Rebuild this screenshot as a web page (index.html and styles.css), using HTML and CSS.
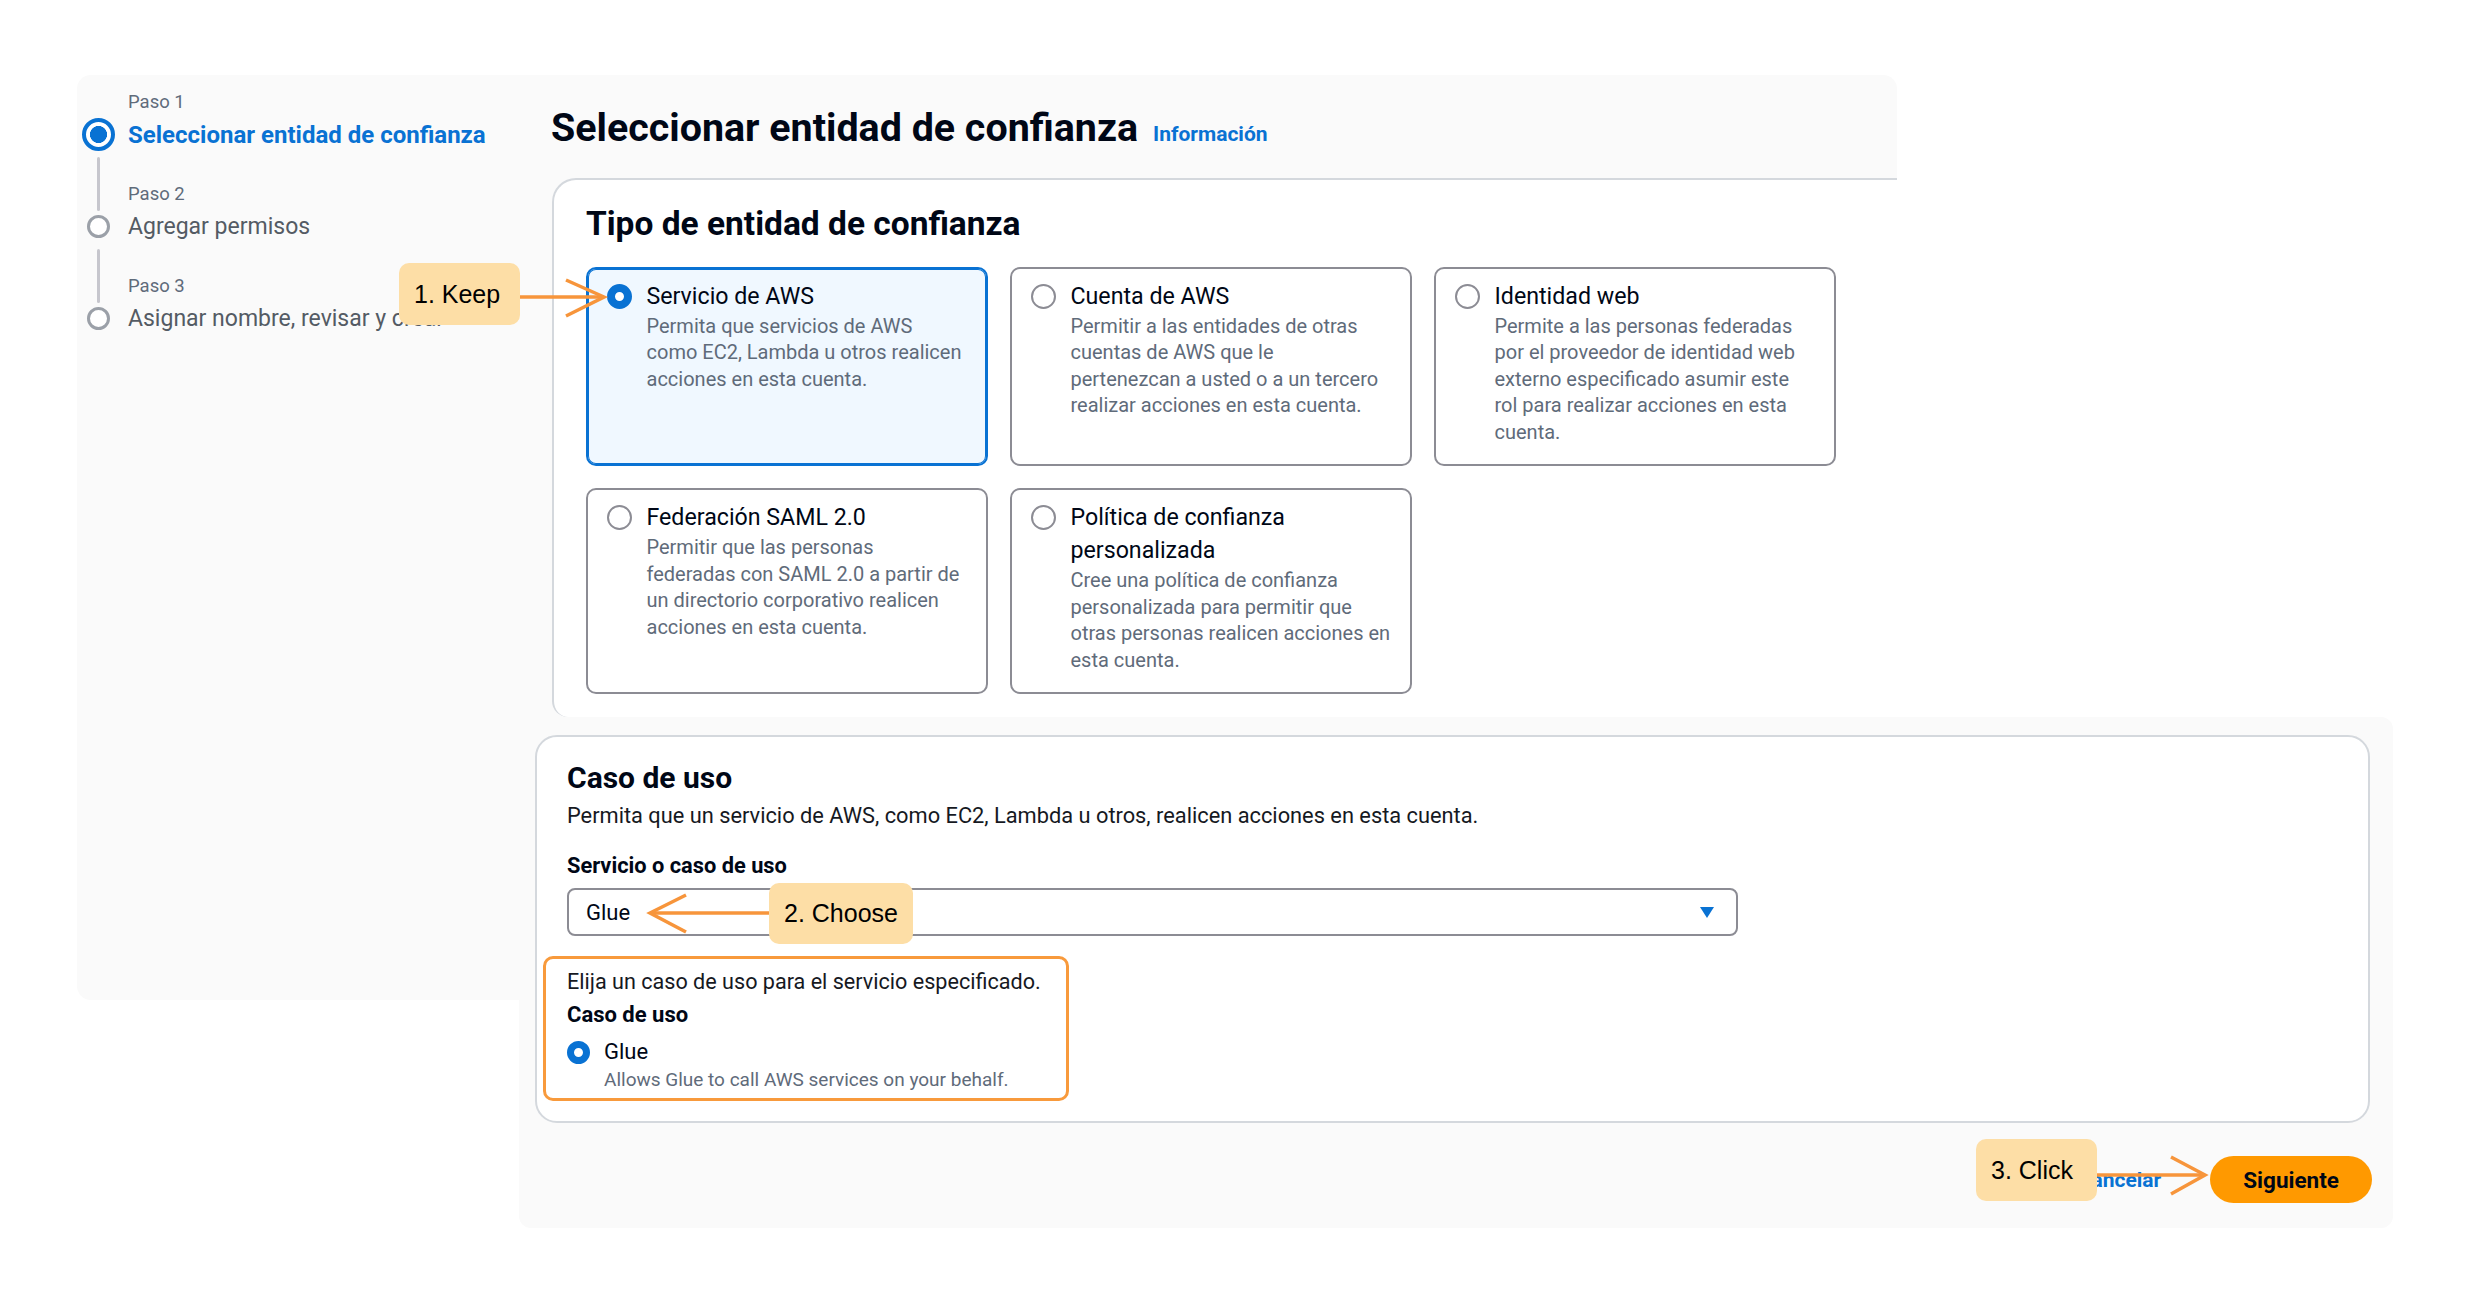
FILE: index.html
```html
<!DOCTYPE html>
<html lang="es">
<head>
<meta charset="utf-8">
<title>Seleccionar entidad de confianza</title>
<link rel="stylesheet" href="styles.css">
</head>
<body>
<div class="page">
  <div class="wizard-top">
    <nav class="steps">
      <div class="step step-first">
        <div class="rail"><span class="rail-gap"></span><span class="dot dot-active"></span></div>
        <div class="step-label">Paso 1</div>
        <div class="step-title step-title-active">Seleccionar entidad de confianza</div>
      </div>
      <div class="step">
        <div class="rail"><span class="rail-line"></span><span class="dot"></span></div>
        <div class="step-label">Paso 2</div>
        <div class="step-title">Agregar permisos</div>
      </div>
      <div class="step">
        <div class="rail"><span class="rail-line"></span><span class="dot"></span></div>
        <div class="step-label">Paso 3</div>
        <div class="step-title">Asignar nombre, revisar y crear</div>
      </div>
    </nav>
    <main class="main">
      <header class="page-header">
        <h1 class="page-title">Seleccionar entidad de confianza</h1>
        <a class="info-link">Información</a>
      </header>
      <section class="tile-group">
        <h2 class="group-title">Tipo de entidad de confianza</h2>
        <div class="tiles">
          <div class="tile tile-selected">
            <span class="radio radio-on"></span>
            <div class="tile-body">
              <div class="tile-title">Servicio de AWS</div>
              <div class="tile-desc">Permita que servicios de AWS<br>como EC2, Lambda u otros realicen<br>acciones en esta cuenta.</div>
            </div>
          </div>
          <div class="tile">
            <span class="radio"></span>
            <div class="tile-body">
              <div class="tile-title">Cuenta de AWS</div>
              <div class="tile-desc">Permitir a las entidades de otras<br>cuentas de AWS que le<br>pertenezcan a usted o a un tercero<br>realizar acciones en esta cuenta.</div>
            </div>
          </div>
          <div class="tile">
            <span class="radio"></span>
            <div class="tile-body">
              <div class="tile-title">Identidad web</div>
              <div class="tile-desc">Permite a las personas federadas<br>por el proveedor de identidad web<br>externo especificado asumir este<br>rol para realizar acciones en esta<br>cuenta.</div>
            </div>
          </div>
          <div class="tile">
            <span class="radio"></span>
            <div class="tile-body">
              <div class="tile-title">Federación SAML 2.0</div>
              <div class="tile-desc">Permitir que las personas<br>federadas con SAML 2.0 a partir de<br>un directorio corporativo realicen<br>acciones en esta cuenta.</div>
            </div>
          </div>
          <div class="tile">
            <span class="radio"></span>
            <div class="tile-body">
              <div class="tile-title">Política de confianza<br>personalizada</div>
              <div class="tile-desc">Cree una política de confianza<br>personalizada para permitir que<br>otras personas realicen acciones en<br>esta cuenta.</div>
            </div>
          </div>
        </div>
      </section>
    </main>
  </div>

  <div class="wizard-bottom">
    <div class="sidebar-tail"></div>
    <div class="panel2">
      <section class="use-case">
        <h2 class="uc-title">Caso de uso</h2>
        <p class="uc-desc">Permita que un servicio de AWS, como EC2, Lambda u otros, realicen acciones en esta cuenta.</p>
        <div class="field-label">Servicio o caso de uso</div>
        <div class="select"><span class="select-value">Glue</span><span class="caret"></span></div>
        <div class="highlight">
          <div class="hl-text">Elija un caso de uso para el servicio especificado.</div>
          <div class="hl-label">Caso de uso</div>
          <div class="option">
            <span class="radio radio-on radio-sm"></span>
            <div class="opt-title">Glue</div>
            <div class="opt-desc">Allows Glue to call AWS services on your behalf.</div>
          </div>
        </div>
      </section>
      <div class="actions">
        <a class="cancel-link">Cancelar</a>
        <button class="btn-primary">Siguiente</button>
      </div>
    </div>
  </div>

  <svg class="arrows" width="2469" height="1307" viewBox="0 0 2469 1307">
    <g fill="none" stroke="#f7953b" stroke-width="3.5" stroke-linejoin="miter">
      <path d="M520 297 H603"/>
      <path d="M566 280 L604 297 L566 316"/>
      <path d="M650 913 H769"/>
      <path d="M686 895 L650 913 L686 932"/>
      <path d="M2097 1175 H2204"/>
      <path d="M2171 1157 L2205 1175 L2171 1194"/>
    </g>
  </svg>
  <div class="callout callout-keep">1. Keep</div>
  <div class="callout callout-choose">2. Choose</div>
  <div class="callout callout-click">3. Click</div>
</div>
</body>
</html>
```

FILE: styles.css
```css
html, body {
  margin: 0;
  padding: 0;
  background: #ffffff;
}

body {
  font-family: Roboto, "Noto Sans", "Liberation Sans", sans-serif;
  color: #000716;
}

.page {
  position: relative;
  width: 2469px;
  height: 1307px;
  box-sizing: border-box;
  padding: 75px 0 0 77px;
  overflow: hidden;
}

/* ---------- top panel ---------- */
.wizard-top {
  width: 1820px;
  height: 642px;
  display: grid;
  grid-template-columns: 475px 1345px;
  background: #fafafa;
  border-radius: 14px 14px 0 0;
}

.steps {
  padding-top: 13.5px;
}

.step {
  display: grid;
  grid-template-columns: 42px 1fr;
  column-gap: 9px;
}

.rail {
  grid-column: 1;
  grid-row: 1 / 3;
  display: flex;
  flex-direction: column;
  align-items: center;
}

.rail-gap {
  flex: 1;
}

.rail-line {
  flex: 1;
  width: 3px;
  margin: 6px 0 4px;
  background: #c6c6cd;
  border-radius: 2px;
}

.dot {
  width: 23px;
  height: 23px;
  box-sizing: border-box;
  border: 3px solid #9ba0a8;
  border-radius: 50%;
  background: #ffffff;
  margin-bottom: 4.5px;
  flex: none;
}

.dot-active {
  width: 33px;
  height: 33px;
  border: 4.5px solid #0972d3;
  background: radial-gradient(circle closest-side, #0972d3 66%, #ffffff 70%);
  margin-bottom: 0;
}

.step-label {
  grid-column: 2;
  margin-top: 30px;
  font-size: 18.5px;
  line-height: 26px;
  color: #5f6b7a;
}

.step-first .step-label {
  margin-top: 0;
}

.step-title {
  grid-column: 2;
  margin-top: 4px;
  font-size: 23px;
  line-height: 32px;
  color: #545b64;
  white-space: nowrap;
}

.step-title-active {
  font-size: 24px;
  font-weight: 700;
  color: #0972d3;
}

/* ---------- main ---------- */
.main {
  display: flex;
  flex-direction: column;
}

.page-header {
  height: 103px;
  box-sizing: border-box;
  padding-top: 28.5px;
  display: flex;
  align-items: baseline;
}

.page-title {
  margin: 0 0 0 -1px;
  font-size: 39.4px;
  line-height: 48px;
  font-weight: 700;
  color: #000716;
}

.info-link {
  margin-left: 15px;
  font-size: 21px;
  font-weight: 700;
  color: #0972d3;
}

.tile-group {
  height: 539px;
  box-sizing: border-box;
  background: #ffffff;
  border-top: 2px solid #d4d8dd;
  border-left: 2px solid #d4d8dd;
  border-radius: 24px 0 0 16px;
  padding: 24px 0 0 32px;
}

.group-title {
  margin: 0;
  font-size: 33.5px;
  line-height: 40px;
  font-weight: 700;
  color: #000716;
}

.tiles {
  margin-top: 23px;
  display: grid;
  grid-template-columns: repeat(3, 402px);
  gap: 22px;
}

.tile {
  box-sizing: border-box;
  border: 2px solid #8c8c94;
  border-radius: 10px;
  padding: 10.5px 8px 19px 18.5px;
  display: grid;
  grid-template-columns: 25px 1fr;
  column-gap: 15px;
  align-items: start;
  background: #ffffff;
}

.tile-selected {
  border-color: #0972d3;
  box-shadow: inset 0 0 0 1px #0972d3;
  background: #f0f8ff;
}

.radio {
  display: block;
  width: 25px;
  height: 25px;
  box-sizing: border-box;
  border: 2px solid #8c8c94;
  border-radius: 50%;
  background: #ffffff;
  margin-top: 4px;
}

.radio-on {
  border: 8px solid #0972d3;
}

.tile-title {
  font-size: 23.2px;
  line-height: 33px;
  color: #000716;
}

.tile-desc {
  font-size: 20px;
  line-height: 26.6px;
  color: #5f6b7a;
  white-space: nowrap;
}

/* ---------- bottom ---------- */
.wizard-bottom {
  display: flex;
  align-items: flex-start;
}

.sidebar-tail {
  width: 442px;
  height: 283px;
  background: #fafafa;
  border-bottom-left-radius: 14px;
}

.panel2 {
  width: 1874px;
  height: 511px;
  box-sizing: border-box;
  background: #fafafa;
  border-radius: 0 12px 12px 12px;
  padding: 18px 23px 0 16px;
}

.use-case {
  height: 388px;
  box-sizing: border-box;
  background: #ffffff;
  border: 2px solid #d4d8dd;
  border-radius: 22px;
  padding: 23px 30px 0;
}

.uc-title {
  margin: 0;
  font-size: 30px;
  line-height: 36px;
  font-weight: 700;
}

.uc-desc {
  margin: 6px 0 0;
  font-size: 21.8px;
  line-height: 28px;
  color: #16191f;
}

.field-label {
  margin-top: 21.5px;
  font-size: 21.8px;
  line-height: 28px;
  font-weight: 700;
}

.select {
  margin-top: 8.5px;
  width: 1171px;
  height: 48px;
  box-sizing: border-box;
  border: 2px solid #8c8c94;
  border-radius: 8px;
  display: flex;
  align-items: center;
  justify-content: space-between;
  padding: 0 22px 0 17px;
  font-size: 22px;
  background: #ffffff;
}

.caret {
  width: 0;
  height: 0;
  border-left: 7.5px solid transparent;
  border-right: 7.5px solid transparent;
  border-top: 11px solid #0972d3;
}

.highlight {
  margin: 20px 0 0 -24px;
  width: 526px;
  box-sizing: border-box;
  border: 3px solid #f89a3c;
  border-radius: 10px;
  padding: 10px 6px 6px 21px;
}

.hl-text {
  font-size: 21.6px;
  line-height: 26px;
  color: #16191f;
  white-space: nowrap;
}

.hl-label {
  margin-top: 6.5px;
  font-size: 22px;
  line-height: 26px;
  font-weight: 700;
}

.option {
  margin-top: 10.5px;
  display: grid;
  grid-template-columns: 23px 1fr;
  column-gap: 14px;
}

.radio-sm {
  width: 23px;
  height: 23px;
  border-width: 7px;
  margin-top: 2.5px;
}

.opt-title {
  font-size: 22px;
  line-height: 28px;
}

.opt-desc {
  grid-column: 2;
  margin-top: 2px;
  font-size: 19px;
  line-height: 24px;
  color: #5f6b7a;
  white-space: nowrap;
}

.actions {
  margin-top: 33px;
  margin-right: -2px;
  display: flex;
  justify-content: flex-end;
  align-items: center;
  gap: 49px;
}

.cancel-link {
  font-size: 21px;
  font-weight: 700;
  color: #0972d3;
}

.btn-primary {
  height: 47px;
  padding: 0 33px;
  border: none;
  border-radius: 24px;
  background: #ff9900;
  font-family: Roboto, "Noto Sans", sans-serif;
  font-size: 22.5px;
  font-weight: 700;
  color: #000716;
}

/* ---------- annotations ---------- */
.arrows {
  position: absolute;
  left: 0;
  top: 0;
  pointer-events: none;
}

.callout {
  position: absolute;
  box-sizing: border-box;
  display: flex;
  align-items: center;
  padding-left: 15px;
  background: #fddea6;
  border-radius: 10px;
  font-family: "Liberation Sans", Arial, sans-serif;
  font-size: 25px;
  color: #000000;
  white-space: nowrap;
}

.callout-keep {
  left: 399px;
  top: 263px;
  width: 121px;
  height: 62px;
}

.callout-choose {
  left: 769px;
  top: 883px;
  width: 144px;
  height: 61px;
}

.callout-click {
  left: 1976px;
  top: 1139px;
  width: 121px;
  height: 62px;
}
```
